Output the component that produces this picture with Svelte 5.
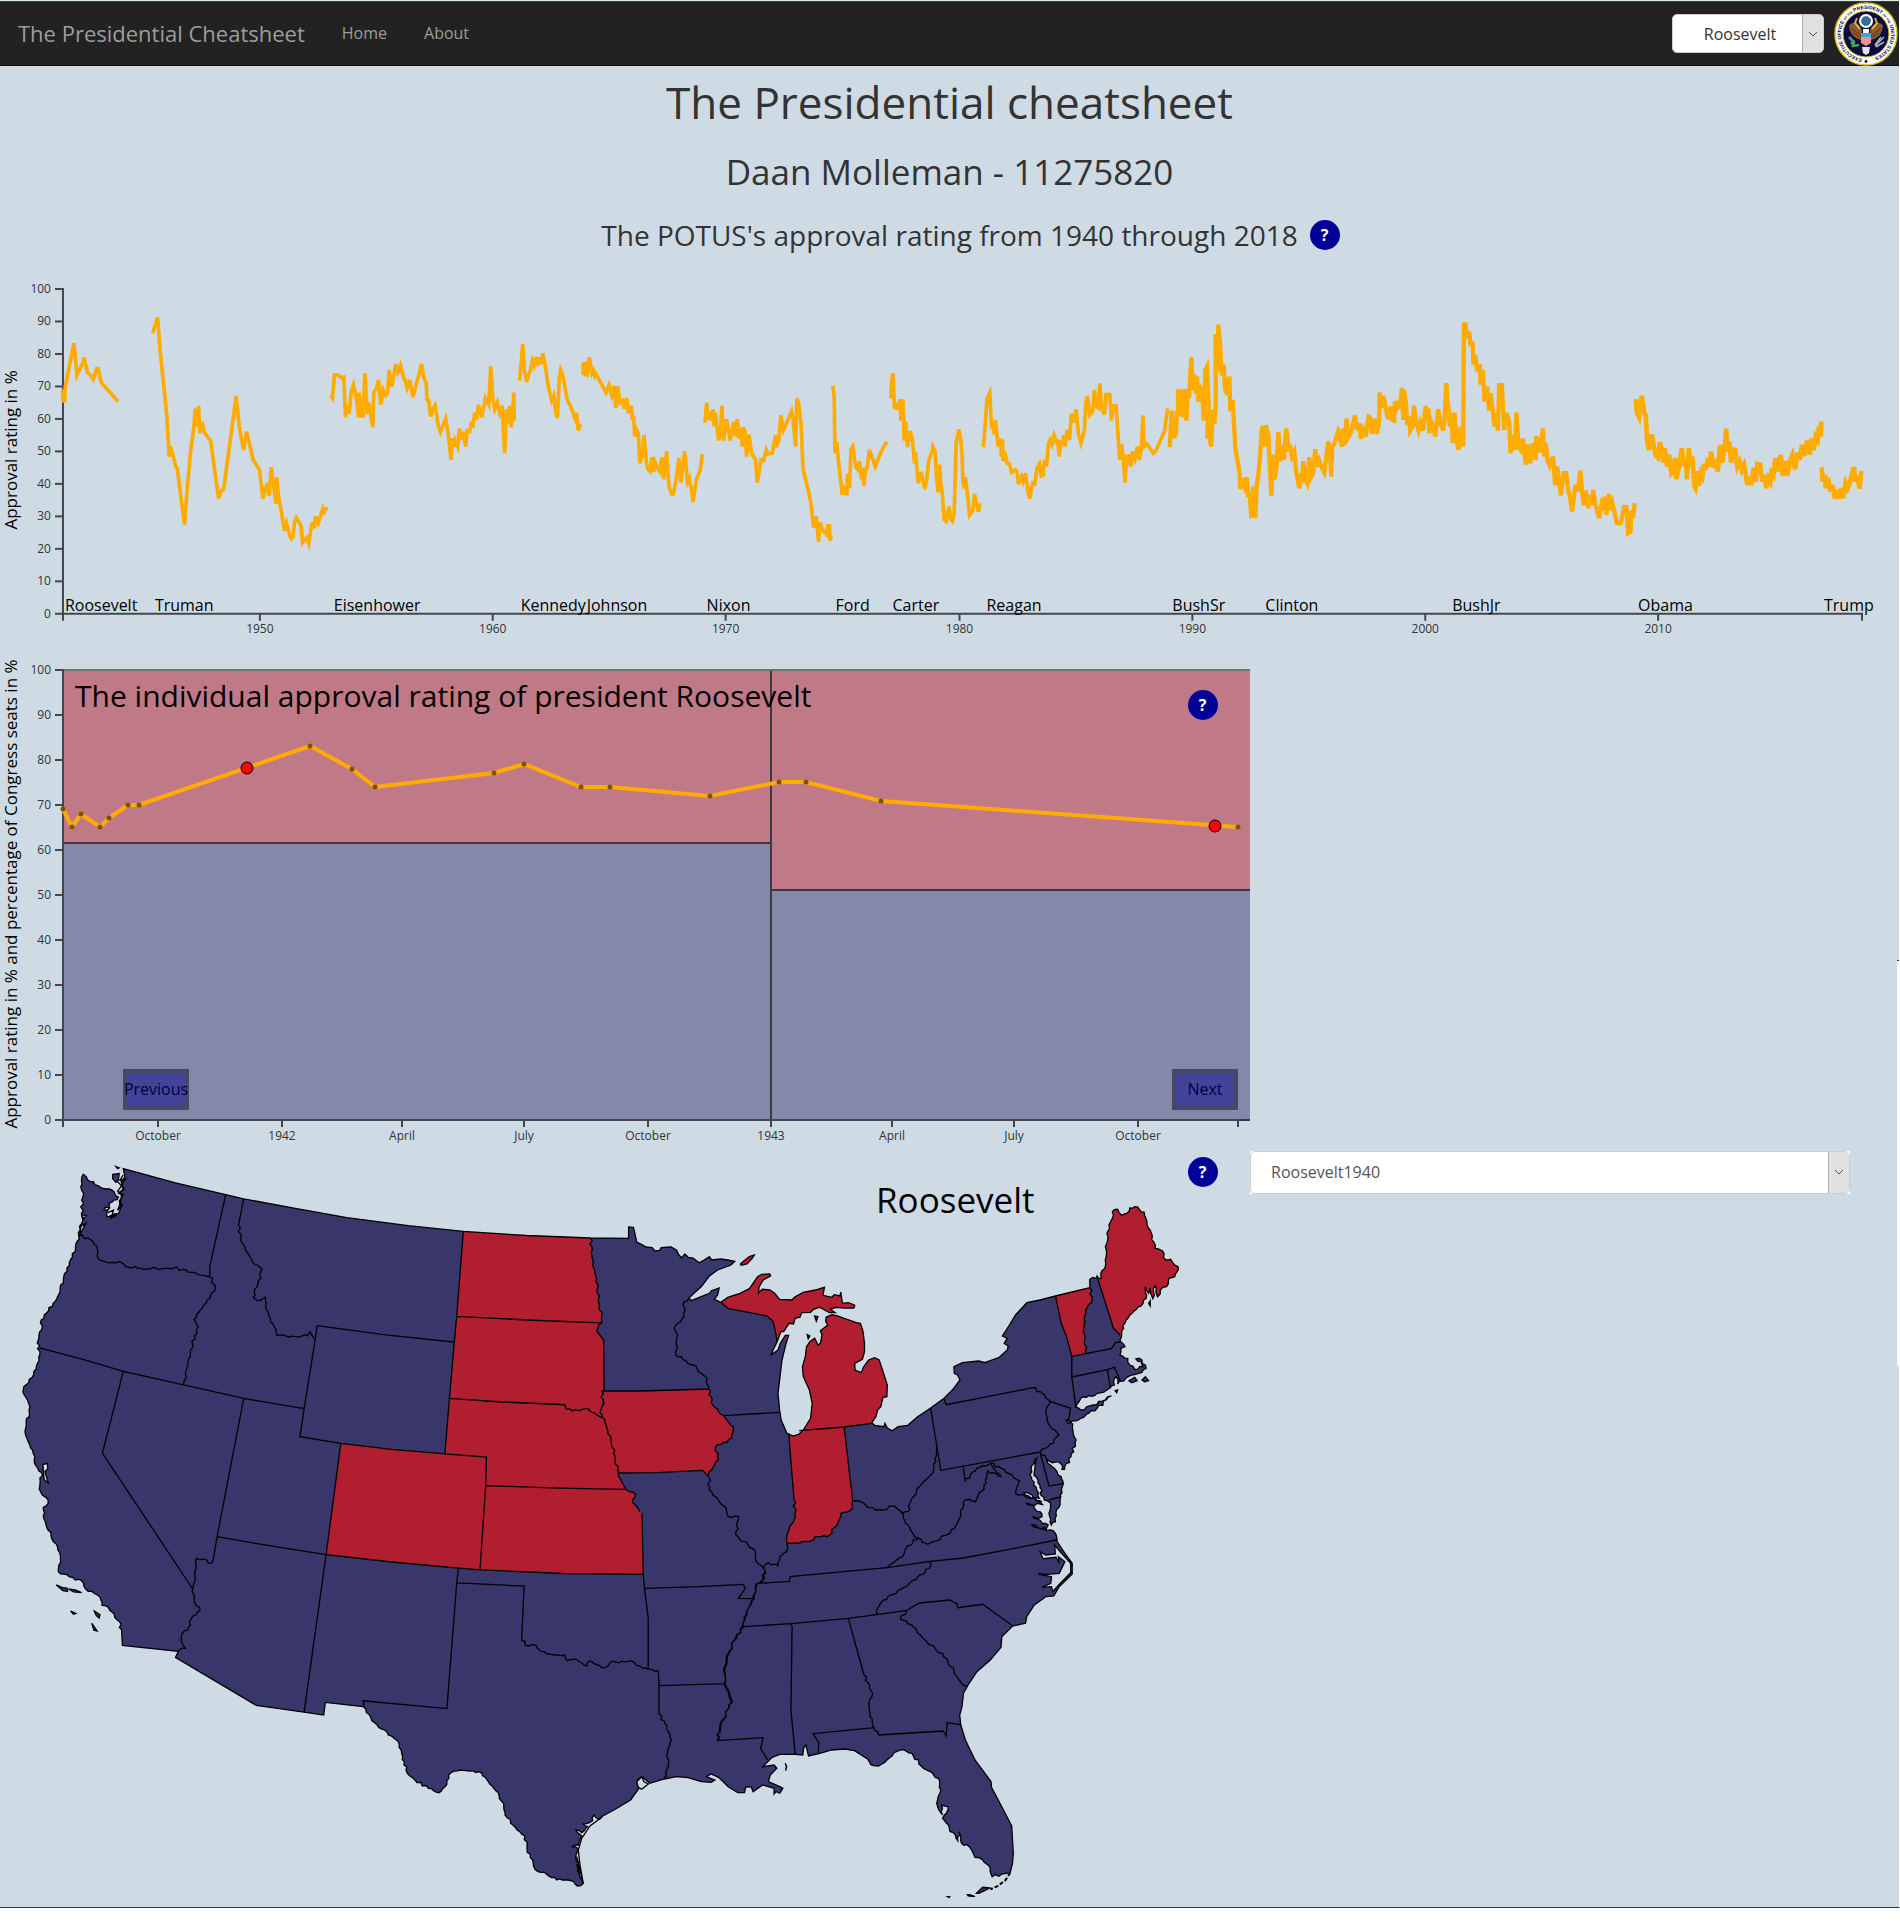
<script>
  const presidents = [
    ['Roosevelt', 65], ['Truman', 155], ['Eisenhower', 334], ['Kennedy', 521], ['Johnson', 587],
    ['Nixon', 707], ['Ford', 836], ['Carter', 893], ['Reagan', 987], ['BushSr', 1173],
    ['Clinton', 1266], ['BushJr', 1453], ['Obama', 1639], ['Trump', 1825]
  ];
  const levels = [0, 10, 20, 30, 40, 50, 60, 70, 80, 90, 100];
  const decades = [[1950, 260], [1960, 493], [1970, 726], [1980, 960], [1990, 1193], [2000, 1426], [2010, 1659]];
  const months = [
    ['October', 158], ['1942', 282], ['April', 402], ['July', 524], ['October', 648],
    ['1943', 771], ['April', 892], ['July', 1014], ['October', 1138]
  ];

  // Approval series, in thirds of a unit: horizontal origin, points, line width.
  const series = [
    [0, '187,358 190,392 194,392 196,350 222,220 231,316 248,280 253,262 262,307 272,316 280,328 290,296 294,296 304,338 354,394', 11],
    [0, '458,190 473,143 481,246 500,430 508,560 512,530 528,590 532,595 554,765 560,680 572,545 582,470 586,416 591,470 596,408 600,490 606,456 616,492 632,512 656,685 664,662 671,660 709,378 718,470 731,540 740,485 760,570 779,600 789,687 802,640 808,678 814,592 823,660 828,702 831,622 836,680 845,728 854,783 860,760 870,798 875,806 880,798 884,756 889,744 904,768 908,818 920,804 927,822 932,786 937,757 943,775 947,740 955,760 968,720 971,735 974,717 984,717', 11],
    [0, '992,375 998,384 1004,315 1014,315 1026,324 1032,322 1037,442 1044,408 1048,432 1054,366 1061,345 1072,400 1076,442 1078,368 1084,438 1090,438 1095,310 1102,432 1107,398 1119,472 1122,368 1130,356 1136,330 1143,404 1150,360 1158,376 1163,370 1168,300 1176,350 1188,282 1194,306 1202,286 1212,326 1216,330 1222,354 1230,330 1239,382 1258,312 1265,282 1273,326 1279,338 1282,390 1287,392 1290,425 1294,440 1300,415 1306,406 1316,470 1322,486 1330,466 1338,446 1345,490 1354,570 1358,505 1364,530 1366,512 1374,530 1379,476 1386,510 1390,486 1398,530 1402,482 1410,484 1414,462 1420,466 1425,428 1431,450 1436,405 1446,442 1457,384 1467,404 1473,290', 11],
    [1440, '33,290 39,385 45,418 53,398 60,430 67,408 75,550 80,418 84,462 90,408 95,472 98,450 102,368 104,452', 11],
    [1440, '120,332 129,222 134,305 141,336 148,310 152,300 158,272 163,286 168,262 174,286 179,262 184,282 189,250 196,282 205,345 216,392 222,378 228,425 233,444 239,325 243,300 250,318 262,388 274,412 286,445 290,428 296,482 302,462', 11],
    [1440, '311,316 311,282 316,280 318,314 323,316 329,262 337,310 341,302 346,320 350,314 379,368 388,346 396,376 403,348 408,414 414,348 421,398 428,392 434,416 441,384 447,430 455,408 458,450 462,438 465,500 471,480 476,492 481,580 488,554 493,496 500,575 504,596 511,604 517,562 522,606 526,576 534,594 540,604 547,562 552,628 561,544 568,650 576,672 581,672 590,628 598,564 604,638 615,544 624,636 629,625 633,650 636,655 640,697 650,630 662,600 668,553', 11],
    [1440, '676,458 681,398 687,450 692,424 696,452 700,418 704,470 707,428 717,512 722,494 727,408 732,512 741,448 752,512 757,480 763,456 768,500 773,448 779,506 783,474 788,530 790,472 796,484 801,560 808,494 816,550 828,570 833,638 838,610 844,570 852,572 860,540 866,552 878,550 888,496 890,532 898,510 904,436 912,480 936,424 940,446 948,530 952,386 957,400 965,470 970,595 988,670 994,700 1002,772 1010,740 1017,815 1022,758 1028,778 1040,793 1045,768 1050,768 1051,812 1056,798', 11],
    [1440, '1060,348 1064,384 1066,550 1072,516 1076,566 1088,675 1093,656 1102,676 1104,612 1110,654 1114,540 1120,530 1128,590 1134,598 1140,574 1146,628 1149,594 1153,648 1158,598 1163,594 1169,540 1180,568 1187,590 1205,545 1222,515', 11],
    [1440, '1234,386 1236,340 1240,310 1245,418 1251,398 1255,420 1262,388 1264,452 1270,388 1274,512 1279,456 1284,532 1292,484 1299,510 1305,580 1308,545 1316,640 1325,606 1336,658 1342,625 1348,570 1358,545 1360,530 1367,544 1370,610 1376,668 1380,584 1384,640 1388,665 1394,750 1400,755 1409,710 1414,748 1419,754 1424,730 1430,520 1438,478 1444,510 1448,560 1450,630 1454,656 1458,622 1466,690 1470,736 1480,722 1485,672 1492,706 1497,726 1501,700', 11],
    [2880, '72,532 83,384 91,368 96,470 101,470 105,494 108,450 116,530 123,506 126,560 129,508 131,574 136,545 143,580 150,582 157,608 168,600 173,606 177,643 186,620 191,635 198,610 206,668 211,687 219,640 226,642 233,594 240,582 246,618 251,616 255,570 261,590 267,522 272,510 278,524 284,496 292,518 295,508 299,560 305,512 310,525 313,496 317,530 323,480 330,510 336,432 342,458 350,418 357,492 365,520 375,480 379,398 384,378 391,435 400,425 405,360 411,410 416,414 421,340 427,416 435,434 439,374 451,374 456,452 462,408 470,408 481,570 487,524 492,568 497,638 502,555 507,570 511,554 515,590 520,545 527,566 534,530 540,570 546,535 551,436 554,530 562,522 582,550 590,542 615,485 625,416', 11],
    [2880, '631,532 637,422 641,500 647,498 650,490 652,430 656,430 656,358 661,430 665,360 669,442 674,358 681,452 686,358 689,384 696,262 700,360 705,314 710,370 713,320 717,395 725,360 729,370 733,452 738,300 743,290 748,400 744,500 750,502 756,530 760,420 765,462 769,410 769,192 773,305 777,164 783,232 787,316 793,284 797,356 804,374 810,320 813,424 820,390 828,535 836,582 841,610 843,658 850,625 856,648 863,622 866,682 871,664 876,745 882,650 888,745 892,650 897,615 902,560 907,485 910,468 917,530 920,466 927,496 932,600 936,677 942,554 946,628 952,590 957,486 963,574 970,525 974,570 981,476 988,545 992,525 998,560 1005,545 1010,600 1014,625 1020,655 1027,610 1028,640 1032,574 1038,628 1044,640 1050,562 1056,620 1062,608 1068,538 1074,590 1080,572 1088,594 1095,608 1100,570 1107,514 1112,545 1116,620 1119,530 1126,520 1130,506 1136,486 1143,510 1149,530 1150,476 1156,526 1162,446 1168,500 1174,490 1180,470 1187,436 1193,480 1200,460 1205,506 1212,480 1219,500 1228,440 1232,442 1238,492 1246,446 1253,492 1260,454 1261,368 1267,412 1273,378 1280,420 1287,448 1294,410 1300,450 1305,452 1307,394 1313,410 1318,394 1322,416 1328,354 1332,450 1334,360 1340,400 1344,465 1350,440 1353,482 1360,470 1364,408 1372,460 1378,482 1384,458 1392,482 1399,408 1404,450 1408,416 1410,490 1416,455 1422,470 1428,500 1437,418 1444,460 1452,482 1456,450 1461,340', 13],
    [4260, '81,340 85,400 88,412 92,470 97,428 101,520 106,428 111,505 118,540 124,470 132,530 134,163 139,163 143,206 150,185 154,228 160,214 163,284 168,256 174,304 182,284 184,344 191,300 196,394 204,350 210,422 214,370 220,415 226,470 231,430 236,482 240,346 248,346 255,480 262,430 270,455 274,550 281,496 287,540 292,428 298,530 305,540 311,506 320,584 326,524 333,580 342,520 350,570 351,500 360,520 364,548 371,476 376,560 380,520 385,570 392,588 402,560 408,646 414,590 425,676 433,610 441,610 447,660 452,680 459,725 466,665 470,645 476,665 484,602 489,670 494,706 500,662 508,715 514,675 517,705 522,660 528,700 540,745 547,705 553,722 556,680 562,735 569,672 574,720 580,700 585,722 593,760 605,760 615,712 622,712 627,790 634,785 637,722 641,745 647,700', 13],
    [4260, '650,388 654,430 660,442 664,400 668,378 674,420 680,440 684,510 689,540 695,500 700,500 704,530 710,556 716,562 723,516 730,560 734,578 737,535 744,590 750,555 757,612 763,608 768,564 771,628 778,600 783,570 788,535 795,588 800,570 804,628 809,535 814,590 820,560 826,650 829,655 834,604 839,648 845,610 850,620 855,582 860,600 867,565 872,590 876,545 884,594 890,568 896,606 903,525 910,578 918,525 921,476 926,545 931,515 936,578 941,540 948,540 955,590 962,575 968,600 975,585 985,645 990,620 996,646 1004,594 1010,635 1015,582 1023,584 1030,635 1036,615 1042,655 1048,625 1054,636 1058,596 1064,610 1069,564 1076,604 1085,555 1091,618 1098,574 1105,618 1112,575 1120,555 1128,598 1136,548 1142,570 1149,525 1156,558 1164,512 1172,554 1178,506 1184,540 1190,500 1196,510 1200,470 1205,500 1207,455', 14],
    [4260, '1208,592 1211,635 1218,615 1220,655 1228,625 1234,665 1240,645 1248,686 1254,660 1260,686 1266,655 1272,685 1280,640 1286,655 1292,640 1298,615 1305,592 1309,635 1314,618 1322,656 1327,604', 14]
  ];

  const polls = [
    [63, 159], [72, 177], [81, 164], [100, 177], [109, 168], [128, 155], [139, 155], [310, 96], [352, 119],
    [375, 137], [494, 123], [524, 114], [581, 137], [610, 137], [710, 146], [779, 132], [806, 132], [881, 151], [1238, 177]
  ];

  // The map is stored on four sheets, each with its own origin and scale.
  const sheets = {
    W: [0, -10, 2.45, 2.45],
    N: [640, -90, 2.45, 3],
    S: [600, 270, 2.6133, 3],
    T: [320, 440, 3, 3]
  };
  const read = (sheet, text) => {
    const [ox, oy, sx, sy] = sheets[sheet];
    return text.split(' ').map((pair) => {
      const [x, y] = pair.split(',').map(Number);
      return [ox + x / sx, oy + y / sy];
    });
  };
  // Breaks long natural edges into short uneven steps, as rivers and coasts have.
  const roughen = (points) => {
    let seed = 7;
    const next = () => ((seed = (seed * 16807) % 2147483647) / 2147483647 - 0.5) * 3;
    const out = [points[0]];
    for (let i = 1; i < points.length; i++) {
      const [ax, ay] = points[i - 1];
      const [bx, by] = points[i];
      const length = Math.hypot(bx - ax, by - ay);
      const steps = Math.max(1, Math.round(length / 3));
      for (let s = 1; s < steps; s++) {
        const d = next() / (length || 1);
        const t = s / steps;
        out.push([ax + (bx - ax) * t - (by - ay) * d, ay + (by - ay) * t + (bx - ax) * d]);
      }
      out.push([bx, by]);
    }
    return out;
  };
  const trace = (parts) =>
    'M' + parts.flatMap(([sheet, text, natural]) => {
      const points = read(sheet, text);
      return natural ? roughen(points) : points;
    }).map(([x, y]) => x.toFixed(1) + ' ' + y.toFixed(1)).join('L');

  const land = trace([
    ['W', '302,70 430,105 553,134 597,144 720,167 850,190 1000,210 1135,224 1290,234 1447,240 1540,241 1540,213 1552,214 1560,250'],
    ['N', '8,556 14,561 30,563 36,573 48,571 52,563 76,561 90,571 94,583 102,594 110,582 118,592 130,594 145,608 157,600 170,590 176,600 198,597 215,600 232,604 222,616 190,630 170,648 150,680 132,700 120,714 126,722 150,710 170,700 175,692 194,684 190,705 182,718 198,727 215,712 245,700 268,686 288,650 298,643 318,642 320,648 302,660 292,680 290,700 300,688 318,690 330,700 342,718 372,720 380,710 400,697 430,690 452,682 448,706 470,712 476,704 490,708 492,696 496,730 510,728 520,732 526,736 524,744 500,744 480,742 466,748 478,758 464,758 440,742 425,748 418,757 396,758 392,772 380,775 376,792 365,790 352,815 345,815 336,845 326,870 322,884 338,870 344,850 356,826 364,826 358,850'],
    ['N', '348,900 343,950 338,1000 342,1050 346,1080 360,1120 375,1128 390,1122 400,1110 418,1075 422,1030 415,990 400,950 398,920 405,890 408,860 416,845 428,835 436,855 442,850 446,825 442,812 460,795 455,785 456,772 470,764 484,768 500,775 530,788 540,790 546,812 550,850 550,875 545,898 526,910 527,930 542,938 548,920 560,900 575,893 586,900 598,945 606,975 605,1010 595,1012 590,1040 582,1050 578,1070 568,1088 575,1096 598,1100 600,1090 606,1104 618,1112 632,1100 656,1096 680,1070 712,1044 745,1015 768,986 784,960 778,945 770,940 769,920 790,908 830,903 845,908 880,892 900,870 902,858 892,850 900,835 888,828 905,795 920,765 948,728 980,720 1018,708 1102,683'],
    ['N', '1102,658 1118,655 1120,648 1130,655 1132,632 1140,620 1142,590 1140,560 1146,540 1144,520 1155,480 1162,449 1170,448 1180,466 1192,460 1200,444 1212,440 1235,456 1250,510 1262,566 1280,572 1288,600 1300,598 1318,620 1310,650 1296,655 1290,680 1275,690 1268,710 1262,678 1256,716 1250,684 1246,700 1238,680 1240,715 1228,738 1200,765 1188,790 1180,820 1176,840 1188,860 1178,865 1176,886 1195,895 1200,915 1212,928 1232,920 1228,905 1215,897 1230,900 1240,925 1222,940 1205,945 1190,955 1170,972 1166,950 1162,975 1150,985 1120,1000 1080,1015 1068,1042 1080,1050 1110,1035 1140,1020 1155,1008 1120,1045 1080,1075 1055,1085 1045,1080 1048,1090 1060,1092 1066,1150 1056,1190 1040,1228 1034,1228 1030,1210 1010,1208 995,1195 1005,1215 1032,1250 1037,1272 1030,1315 1018,1385 1008,1395 1004,1370 1006,1330 990,1320 980,1300 985,1290 975,1260 965,1245 968,1215 972,1195 958,1225 955,1245 972,1290 978,1315 940,1298 980,1325 988,1335 945,1330 980,1355 985,1370 962,1370 1000,1395 995,1412 960,1395 1012,1412 1022,1440', true],
    ['S', '1192,360 1215,400 1234,430 1234,462 1200,500 1186,528 1165,530 1135,555 1115,590 1112,610 1078,618 1050,650 1048,682 1020,720 985,755 962,795 950,820 946,860 940,885 943,915'],
    ['S', '955,960 980,1020 1022,1085 1023,1102 1050,1160 1076,1218 1080,1300 1078,1330 1072,1358'],
    ['S', '1050,1362 1025,1370 1020,1345 1000,1320 980,1312 965,1280 945,1270 938,1235 935,1262 895,1195 910,1160 893,1155 895,1185 880,1150 888,1120 884,1075 868,1058 845,1045 815,1000 785,990 768,998 750,1020 728,1038 708,1034 700,1018', true],
    ['S', '665,992 640,987 605,990 575,1000 545,1008 538,975 532,985 530,1005 510,1003 470,1003 450,1012 425,1040 455,1035 462,1045 445,1065 440,1085 470,1100 478,1105 470,1120 460,1115 455,1122 455,1105 425,1095 400,1115 395,1100 380,1102 378,1118 360,1118 335,1100 310,1072 290,1062 278,1070 300,1080 290,1087 265,1085 230,1073 200,1070 168,1077 130,1090 110,1070 98,1080 105,1100 80,1140 40,1168 4,1190'],
    ['T', '845,682 830,685 822,676 818,692 790,702 803,710 785,728 768,720 785,738 775,765 758,770 773,775 768,810 778,850 785,868 790,880 772,888 752,872 710,870 680,853 645,838 638,810 622,787 615,738 592,720 562,683 535,608 505,575 485,550 422,540 393,548 375,590 357,608 325,595 285,570 258,540 248,500 238,462 205,435 152,382 130,350', true],
    ['W', '797,1378 793,1409 745,1402 628,1385 430,1268 437,1253 300,1238'],
    ['W', '298,1200 292,1180 265,1145 250,1140 245,1120 210,1100 200,1080 148,1063 143,1050 148,1018 125,970 106,920 106,900 118,890 112,875 96,855 102,815 84,790 80,760 62,720 64,690 72,670 70,645 56,618 58,605 82,575 96,540 94,490 102,465 99,448 130,400 155,350 170,300 185,265 193,235 200,205 200,180 203,140 198,115 204,84 215,98 240,112 280,128 290,140 275,152 255,172 270,165 262,188 290,180 298,140 290,130 302,120 296,100 306,90', true]
  ]) + 'Z';

  const straight = [
    ['W', '553,134 514,310 514,335'], ['W', '597,144 584,210'],
    ['W', '97,509 205,538 302,567 450,600 597,633 745,658'],
    ['W', '777,455 772,490 745,658 735,727 835,743 960,758 1090,769 1101,633 1113,495 940,477 777,455'],
    ['W', '1135,224 1119,432 1113,495'], ['W', '1119,432 1290,441 1474,448'],
    ['W', '1101,633 1230,642 1375,648'], ['W', '1462,468 1479,490 1480,615'], ['W', '1474,615 1568,615'], ['N', '0,993 168,987'],
    ['S', '48,159 150,158 268,151 285,172'], ['W', '1190,847 1370,853 1533,856'],
    ['W', '1090,769 1192,777 1190,847 1176,1053'], ['W', '799,1016 960,1034 1123,1049 1176,1053 1380,1062 1568,1064'],
    ['S', '104,463 113,462'], ['S', '110,280 113,462'], ['W', '835,743 799,1016 745,1402'], ['W', '597,633 532,972 522,1030'],
    ['W', '302,567 251,767 472,1100'], ['W', '532,972 660,994 799,1016'],
    ['W', '1123,1049 1119,1085 1095,1393 889,1374 893,1390'], ['W', '1119,1085 1284,1093 1278,1227'],
    ['T', '1015,242 1017,287 1017,373'], ['S', '154,797 328,791'], ['S', '113,462 116,505 126,595 126,748'],
    ['S', '116,505 260,500 374,493 380,505 362,535 400,536'], ['S', '306,962 426,953 420,985 438,1020'],
    ['S', '412,490 495,484 497,470 750,443 862,424 950,414 1080,386 1192,360'], ['S', '374,620 498,611 649,595 800,572'],
    ['S', '800,572 835,549 915,540 933,552 935,563 1000,553 1078,617'], ['S', '498,611 502,620 499,870 510,1003'],
    ['S', '649,595 690,765'], ['S', '718,923 556,941 572,968 570,1000'], ['S', '727,945 897,933 905,948 907,908 943,914'],
    ['S', '493,40 507,240'], ['S', '638,20 660,240'], ['N', '390,1112 500,1101 568,1090'], ['N', '205,1067 342,1057'],
    ['N', '198,727 215,745 312,768 326,785 332,815 336,845'], ['N', '712,1044 737,1231 980,1176'], ['N', '745,1015 750,1034 962,983'],
    ['N', '1005,1024 1055,1045 1050,1082'], ['N', '1018,708 1032,790 1045,830 1058,889 1058,951 1068,1042'],
    ['N', '1058,889 1155,866 1165,848 1176,846'], ['N', '1120,650 1160,805 1176,825'],
    ['N', '1058,951 1145,929 1162,922 1178,965'], ['N', '1145,929 1153,985'], ['N', '980,1176 1002,1278 1036,1271'],
    ['N', '1002,1320 1033,1310'], ['N', '792,1222 797,1265'],
    ['W', '286,100 298,112 288,126 302,134 292,150 300,160 288,172 296,152'], ['W', '264,178 278,172 272,192 286,184 268,186'],
    ['W', '302,86 294,98 308,96 298,108 304,122 294,128']
  ];
  const rivers = [
    ['W', '584,210 592,250 625,305 642,317 630,360 620,385 630,393 650,385 658,430 668,450 678,478 700,480 740,480 755,480 760,470 772,490'],
    ['W', '193,235 215,240 238,260 240,290 262,300 290,298 315,312 360,315 425,313'], ['W', '425,313 514,335'],
    ['W', '514,335 528,362 505,400 475,440 486,458 476,480'], ['W', '476,480 450,600'],
    ['W', '1447,240 1451,290 1462,340 1466,390 1474,430 1474,448 1462,468'], ['W', '1375,648 1402,664 1440,658 1475,680'],
    ['W', '1474,615 1478,650 1470,668 1482,685 1498,740 1508,780 1515,815 1530,850 1557,868 1550,888 1568,912'],
    ['W', '522,1030 510,1037 500,1027 481,1025 478,1080 472,1100 476,1130 490,1152 468,1175 460,1200 446,1210 445,1230 454,1245 437,1253'],
    ['T', '605,152 625,168 648,166 662,184 690,192 735,196 742,212 770,208 785,218 800,228 812,212 830,224 856,232 870,218 905,214 935,212 960,228 985,238 1015,242'],
    ['T', '1017,373 1035,400 1055,450 1042,490 1045,530 1032,565'],
    ['S', '285,172 285,210 330,265 335,290 362,290 355,345 405,390 412,430 428,445'],
    ['S', '428,445 430,475 412,490 400,536 380,590 372,620 358,650 335,700 325,760 330,800 345,848 315,910 306,962'],
    ['S', '430,450 427,477 409,491 403,536 377,591 374,622 355,651 337,701 327,761 327,800 343,849 317,910 307,960'],
    ['S', '862,424 860,445 800,500 740,540 725,565 725,582'], ['S', '800,572 785,598 815,615 850,660 905,715 945,790 960,797'],
    ['S', '690,765 712,820 703,855 712,915 727,945'],
    ['S', '428,445 440,428 465,437 470,410 488,395 488,370 545,365 570,350 600,345 625,300 630,280 660,265 660,240 675,242 700,262 735,270 770,258 790,280 805,275 815,235 835,200 870,160 880,80'],
    ['S', '507,240 511,290 490,340 488,370'], ['N', '120,714 108,725 108,770 84,805 92,825 88,885 130,915 165,955 168,987'],
    ['N', '168,987 178,1035 205,1067 228,1100 225,1135 185,1162 192,1200 168,1245'],
    ['N', '962,983 985,1000 1005,1024 995,1050 1000,1090 1026,1126 1000,1160 980,1176 995,1195'],
    ['N', '1102,683 1108,720 1092,750 1088,820 1093,880'],
    ['N', '797,1265 825,1225 858,1210 884,1250 852,1232 848,1270 822,1325 797,1320 775,1395 760,1420 705,1453 680,1435 650,1390 645,1358'],
    ['N', '858,1210 885,1225 930,1262 920,1300 985,1325'], ['S', '832,350 800,385 790,410 750,443']
  ];
  const borders = [...straight.map((b) => trace([b])), ...rivers.map(([s, t]) => trace([[s, t, true]]))].join('');

  const republican = [
    [['W', '1135,224 1447,240 1451,290 1462,340 1466,390 1474,430 1474,448 1462,468 1479,490 1479,615 1470,668 1482,685 1498,740 1508,780 1515,815 1530,850 1557,868 1550,888 1567,912'], ['S', '110,280 113,462'], ['W', '1380,1062 1176,1053 1123,1049 960,1034 799,1016 835,743 1090,769 1101,633 1119,432']],
    [['W', '1474,615'], ['N', '0,993 168,987 178,1035 205,1067 228,1100 225,1135 185,1162 192,1200 168,1245'], ['S', '268,151 150,158 48,159'], ['W', '1508,780 1498,740 1482,685 1470,668 1478,650']],
    [['S', '493,40 507,240 511,290 490,340 488,370 545,365 570,350 600,345 625,300 630,280 660,265 660,240 638,20 525,32 500,48']],
    [['N', '198,727 215,745 312,768 326,785 332,815 336,845 370,830 385,1000 390,1112 500,1101 568,1090 625,1085 625,880 560,770 540,700 320,620 250,690']],
    [['N', '1018,708 1102,683 1108,720 1092,750 1088,820 1093,880 1058,889 1045,830 1032,790']],
    [['N', '1120,650 1160,805 1176,825 1230,800 1350,640 1260,420 1150,420 1120,560']]
  ].map((parts) => trace(parts) + 'Z').join('');

  const sounds = [
    [['W', '105,795 116,792 117,805 110,812 118,840 108,832']],
    [['S', '1158,416 1150,395 1165,405 1190,402 1188,375 1205,398 1230,430 1230,458 1198,496 1183,515 1180,500 1155,502 1178,490 1180,470 1145,462 1170,463 1200,460 1215,425 1198,410 1200,430 1192,412']],
    [['T', '950,575 965,560 972,575 985,582 965,598 955,592']],
    [['T', '770,800 778,828 786,868 779,860']],
    [['W', '200,182 212,186 204,192']], [['W', '196,232 210,204 198,212']]
  ].map((parts) => trace(parts) + 'Z').join('');
  const islands = [
    [['W', '138,1090 152,1096 165,1098 166,1106 154,1104']], [['W', '168,1100 184,1102 200,1109 180,1107']],
    [['W', '173,1154 186,1160 180,1162']], [['W', '231,1154 245,1163 243,1171 236,1165']], [['W', '225,1184 238,1203 230,1201']],
    [['W', '276,84 292,82 290,98 284,104 276,95']], [['W', '284,65 292,68 288,70']],
    [['N', '428,768 436,770 432,784']], [['N', '410,824 416,828 412,836']],
    [['N', '1198,962 1212,952 1218,962 1205,968']], [['N', '1230,960 1238,950 1246,962 1236,965']], [['N', '1164,992 1170,990 1168,998']],
    [['N', '1246,730 1250,722 1250,738']],
    [['S', '984,1420 1000,1402 1018,1404 1005,1412 990,1420']], [['S', '960,1424 968,1425 980,1430 962,1428']],
    [['S', '908,1430 914,1430 912,1433']], [['S', '484,1030 488,1040 485,1052 487,1040']]
  ].map((parts) => trace(parts) + 'Z').join('');
  const isleRoyale = trace([['N', '246,612 255,602 268,590 280,585 275,595 262,612 248,616']]) + 'Z';
  const keys = trace([['S', '1072,1358 1060,1380 1040,1398 1020,1408']]);
  const barrier = trace([['T', '845,682 810,708 785,745 775,780 780,825 790,880']]);

  let president = $state('Roosevelt');
  let election = $state('Roosevelt1940');
</script>

{#snippet chevron()}
  <span class="arrow"><svg viewBox="0 0 10 6" aria-hidden="true"><path d="M1 1l4 4 4-4" /></svg></span>
{/snippet}

<div class="page">
  <nav>
    <a class="brand" href="#top">The Presidential Cheatsheet</a>
    <a href="#home">Home</a>
    <a href="#about">About</a>
    <div class="picker small">
      <select aria-label="President" bind:value={president}>
        {#each presidents as [name]}<option>{name}</option>{/each}
      </select>
      {@render chevron()}
    </div>
    <svg class="seal" viewBox="-32 -32 64 64" role="img" aria-label="Presidential seal">
      <circle r="31" fill="#fff" stroke="#d9bd2b" stroke-width="1.5" />
      <circle r="23" fill="#0b0b3f" stroke="#d9bd2b" />
      <path id="ring" d="M-4 24.7A25 25 0 1 1 4 24.7" fill="none" />
      <text class="ring"><textPath href="#ring">EXECUTIVE OFFICE <tspan class="tiny">OF THE</tspan> PRESIDENT <tspan class="tiny">OF THE</tspan> UNITED STATES</textPath></text>
      <circle cy="27.5" r="1.4" fill="#0b0b3f" />
      <path d="M-4-4C-8-12-15-13-17-8c1 7 4 12 12 14zM4-4C8-12 15-13 17-8 16-1 13 4 5 6z" fill="#8a5a32" />
      <path d="M-15-6l10 8M-13-1l8 5M15-6L5 2M13-1L5 4" stroke="#5b3618" fill="none" />
      <path d="M-9-16l-2 5 5 6M9-16l2 5-5 6" stroke="#d8b531" stroke-width="2" fill="none" />
      <circle cy="-13" r="7" fill="#fff" />
      <circle cy="-13" r="4.5" fill="#2d6fa3" stroke="#15324f" stroke-dasharray="1 1" />
      <path d="M-3-5h6v4h-6z" fill="#fff" />
      <path d="M-5-1H5v10L0 12-5 9z" fill="#f08e98" />
      <path d="M-5-1H5v4H-5z" fill="#35a8dc" />
      <path d="M-17 3l5 5-1 4 6-1M-15 8l3 4" stroke="#4aa35c" stroke-width="2.5" fill="none" />
      <path d="M18 3L9 12M15 3l-6 8M18 8l-8 5" stroke="#aeb4bd" stroke-width="1.5" fill="none" />
      <path d="M-4 13h8l-1 6-3 2-3-2z" fill="#e2e4e8" />
    </svg>
  </nav>

  <header>
    <h1>The Presidential cheatsheet</h1>
    <h2>Daan Molleman - 11275820</h2>
    <div class="subtitle">
      <h3>The POTUS's approval rating from 1940 through 2018</h3>
      <button class="help" aria-label="Help on all ratings">?</button>
    </div>
  </header>

  <svg class="plot" viewBox="0 0 1900 380" role="img" aria-label="Approval rating of all presidents">
    <g class="axis">
      <path d="M55 19h8v332M55 344H1863v7" />
      {#each levels as v}
        {#if v}<path d="M55 {344 - v * 3.25}h8" />{/if}
        <text class="end" x="51" y={348 - v * 3.25}>{v}</text>
      {/each}
      {#each decades as [year, x]}
        <path d="M{x} 344v7" />
        <text class="mid" {x} y="363">{year}</text>
      {/each}
    </g>
    <text class="label side" transform="translate(17 180) rotate(-90)">Approval rating in %</text>
    <g class="rating" transform="scale(.33333)">
      {#each series as [x, points, width]}<polyline transform="translate({x})" {points} stroke-width={width} />{/each}
    </g>
    {#each presidents as [name, x]}<text class="label" {x} y="341">{name}</text>{/each}
  </svg>

  <div class="row">
    <div class="panel">
      <svg class="plot" viewBox="0 0 1250 500" role="img" aria-label="Individual approval rating">
        <path d="M63 20h708v173H63zM771 20h479v220H771z" fill="#c07a87" />
        <path d="M63 193h708v277H63zM771 240h479v230H771z" fill="#8489aa" />
        <path class="seats" d="M63 193h708M771 240h479M771 20v450M63 470h1187" />
        <path d="M63 20h1187" stroke="#6d7277" stroke-width="2" />
        <g class="axis">
          <path d="M55 20h8v457M55 470H1238v7" />
          {#each levels as v}
            {#if v}<path d="M55 {470 - v * 4.5}h8" />{/if}
            <text class="end" x="51" y={474 - v * 4.5}>{v}</text>
          {/each}
          {#each months as [name, x]}
            <path d="M{x} 470v7" />
            <text class="mid" {x} y="490">{name}</text>
          {/each}
        </g>
        <text class="label side" transform="translate(17 244) rotate(-90)">Approval rating in % and percentage of Congress seats in %</text>
        <polyline class="individual" points={polls.join(' ')} />
        {#each polls as [x, y]}<circle cx={x} cy={y} r="2.5" fill="#7a5200" />{/each}
        <circle class="event" cx="247" cy="118" r="6" />
        <circle class="event" cx="1215" cy="176" r="6" />
        <text class="title" x="75" y="57">The individual approval rating of president {president}</text>
      </svg>
      <button class="help in-chart" aria-label="Help on this rating">?</button>
      <button class="step previous">Previous</button>
      <button class="step next">Next</button>
    </div>
  </div>

  <div class="row">
    <div class="panel">
      <svg class="plot" viewBox="0 0 1250 757" role="img" aria-label="Election map">
        <clipPath id="coast"><path d={land} /></clipPath>
        <path d={land} fill="#38366b" />
        <path d={republican} fill="#b01e30" clip-path="url(#coast)" />
        <path class="line" d={land} />
        <path class="line" d={borders} />
        <path class="line" d={sounds} fill="#cfdbe4" />
        <path class="line" d={islands} fill="#38366b" />
        <path class="line" d={isleRoyale} fill="#b01e30" />
        <path class="line" d={barrier} />
        <path class="line keys" d={keys} />
        <text class="name" x="876" y="63">{president}</text>
      </svg>
      <button class="help in-map" aria-label="Help on the map">?</button>
    </div>
    <div class="picker large">
      <select aria-label="Election" bind:value={election}>
        <option>Roosevelt1940</option>
        <option>Roosevelt1944</option>
      </select>
      {@render chevron()}
    </div>
  </div>
  <span class="edge"></span>
</div>

<style>
  :global(body) {
    margin: 0;
    background: #fff;
  }
  .page {
    position: relative;
    border-top: 1px solid #e4e6e8;
    border-right: 1px solid #fff;
    border-bottom: 1px solid #333;
    background: #cfdbe4;
    color: #333;
    font-family: "Open Sans", sans-serif;
    font-size: 16px;
  }
  nav {
    display: flex;
    align-items: center;
    box-sizing: border-box;
    height: 65px;
    padding-left: 18px;
    border-top: 1px solid #2c4a2c;
    border-bottom: 1px solid #080808;
    background: #222;
  }
  nav a {
    margin-right: 37px;
    padding-bottom: 2px;
    color: #9d9d9d;
    text-decoration: none;
  }
  nav .brand {
    font-size: 22px;
  }
  .picker {
    position: relative;
  }
  .picker select {
    display: block;
    box-sizing: border-box;
    width: 100%;
    appearance: none;
    border: 1px solid #ccc;
    border-radius: 5px;
    background: #fff;
    color: #333;
    font: inherit;
  }
  .small {
    width: 152px;
    margin-left: auto;
  }
  .small select {
    height: 39px;
    padding: 0 38px 0 22px;
    text-align-last: center;
  }
  .large {
    align-self: start;
    margin-top: 1px;
    background: #fff;
  }
  .large select {
    height: 43px;
    padding: 0 20px;
    color: #555;
  }
  .arrow {
    position: absolute;
    top: 1px;
    right: 1px;
    bottom: 1px;
    display: grid;
    place-items: center;
    width: 20px;
    border-left: 1px solid #adadad;
    border-radius: 0 4px 4px 0;
    background: #e1e1e1;
    pointer-events: none;
  }
  .arrow svg {
    width: 10px;
    fill: none;
    stroke: #555;
  }
  .seal {
    width: 64px;
    height: 64px;
    margin-left: 10px;
    margin-right: 1px;
  }
  .ring {
    fill: #0b0b3f;
    font: bold 5px "Liberation Sans", sans-serif;
  }
  .tiny {
    font-size: 3px;
  }
  header {
    box-sizing: border-box;
    height: 204px;
    padding-top: 8px;
    text-align: center;
  }
  h1,
  h2,
  h3 {
    margin: 0;
    font-weight: 400;
  }
  h1 {
    font-size: 44px;
    line-height: 56px;
  }
  h2 {
    margin-top: 20px;
    font-size: 35px;
    line-height: 44px;
  }
  .subtitle {
    display: grid;
    grid-template-columns: 1fr auto 1fr;
    column-gap: 12px;
    align-items: center;
    margin-top: 22px;
  }
  h3 {
    grid-column: 2;
    font-size: 28px;
    line-height: 38px;
  }
  .help {
    display: block;
    width: 30px;
    height: 30px;
    padding: 0;
    border: 0;
    border-radius: 50%;
    background: #009;
    color: #fff;
    font: bold 16px "Open Sans", sans-serif;
  }
  .plot {
    display: block;
    width: 100%;
    font-family: "Open Sans", sans-serif;
  }
  .axis path {
    fill: none;
    stroke: #44484c;
    stroke-width: 2;
  }
  .axis text {
    fill: #333;
    font-size: 12px;
  }
  .mid {
    text-anchor: middle;
  }
  .end {
    text-anchor: end;
  }
  .label {
    fill: #000;
    font-size: 16px;
  }
  .side {
    font-size: 17px;
    text-anchor: middle;
  }
  .title {
    fill: #000;
    font-size: 30px;
  }
  .name {
    fill: #000;
    font-size: 35px;
  }
  .rating {
    fill: none;
    stroke: #ffab00;
  }
  .individual {
    fill: none;
    stroke: #ffab00;
    stroke-width: 4;
  }
  .event {
    fill: red;
    stroke: #000;
  }
  .seats {
    fill: none;
    stroke: #3a3a40;
    stroke-width: 2;
  }
  .line {
    stroke: #000;
    stroke-width: 1.3;
  }
  .line:not([fill]) {
    fill: none;
  }
  .keys {
    stroke-dasharray: 4 2;
    stroke-width: 2;
  }
  .row {
    display: grid;
    grid-template-columns: 1250fr 600fr 49fr;
  }
  .panel {
    position: relative;
  }
  .in-chart,
  .in-map {
    position: absolute;
    left: 95%;
  }
  .in-chart {
    top: 8%;
  }
  .in-map {
    top: 1%;
  }
  .step {
    position: absolute;
    bottom: 8%;
    display: flex;
    align-items: center;
    justify-content: center;
    box-sizing: border-box;
    width: 66px;
    height: 41px;
    padding: 0;
    border: 4px solid #454962;
    background: #434499;
    color: #000040;
    font: inherit;
  }
  .previous {
    left: 123px;
  }
  .next {
    right: 12px;
  }
  .edge {
    position: absolute;
    top: 959px;
    right: 0;
    box-sizing: border-box;
    width: 2px;
    height: 406px;
    border-top: 1px solid #333;
    background: #fff;
  }
</style>
